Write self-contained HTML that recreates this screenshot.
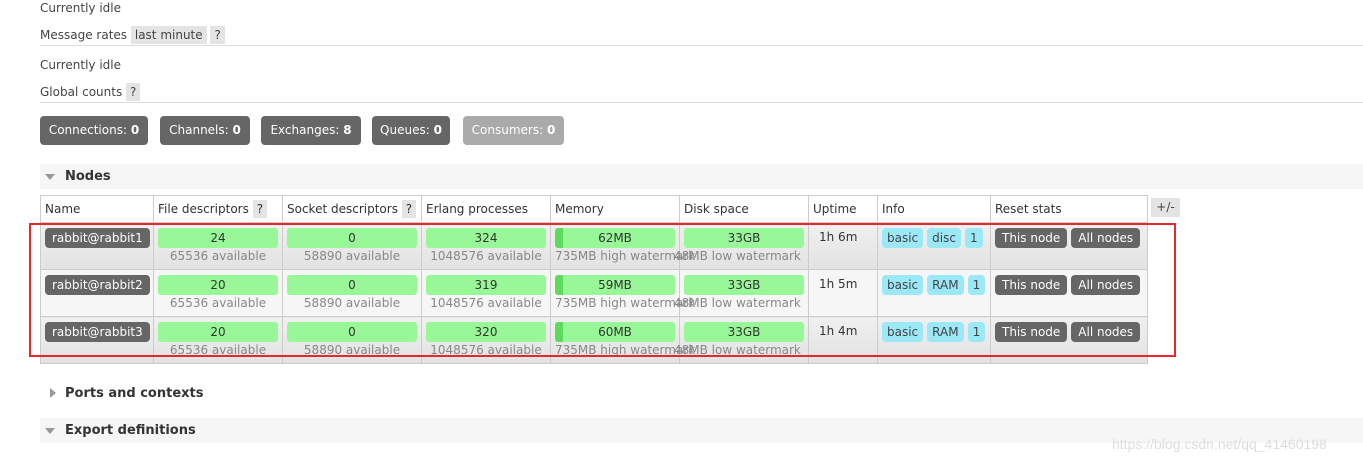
<!DOCTYPE html>
<html><head><style>
*{margin:0;padding:0;box-sizing:border-box}
body{width:1363px;height:463px;background:#fff;font-family:"DejaVu Sans","Liberation Sans",sans-serif;font-size:12px;color:#444;position:relative;overflow:hidden}
.a{position:absolute;white-space:nowrap}
.q{background:#e4e4e4;padding:2px 4px}
.hr{position:absolute;left:40px;right:0;height:1px;background:#ddd}
.btn{position:absolute;top:116px;height:29px;line-height:29px;background:#666;color:#fff;border-radius:4px;text-align:center;font-size:12px}
.btn b{font-weight:bold}
.band{position:absolute;left:40px;right:0;height:25px;background:#f6f6f6}
.tri{position:absolute;width:0;height:0}
td,th{border:1px solid #ccc;vertical-align:top;white-space:nowrap;overflow:visible}
table{position:absolute;left:40px;top:195px;border-collapse:collapse;font-size:12px;table-layout:fixed;width:1107px}
th{height:27px;font-weight:normal;text-align:left;padding:6px 4px 0;background:#fff;color:#333}
td{height:47px;padding:5px 4px 0;text-align:center;color:#333}
tr.g td{background:linear-gradient(#f0f0f0,#e2e2e2)}
tr.l td{background:#f6f6f6}
.bar{background:#98f898;height:20px;line-height:20px;border-radius:3px;color:#333}
.sub{color:#888;font-size:12px;line-height:16px;white-space:nowrap}
.nm{display:inline-block;background:#666;color:#fff;border-radius:4px;padding:0 7px;height:20px;line-height:20px;font-size:12px}
.tag{display:inline-block;background:#9ae8f8;border-radius:4px;height:20px;line-height:20px;padding:0 5px;margin-right:4px;color:#444}
.rb{display:inline-block;background:#666;color:#fff;border-radius:4px;height:20px;line-height:20px;padding:0 7px;margin-right:4px}
</style></head><body>
<div class="a" style="left:40px;top:1px">Currently idle</div>
<div class="a" style="left:40px;top:28px">Message rates <span class="q">last minute</span> <span class="q">?</span></div>
<div class="hr" style="top:45px"></div>
<div class="a" style="left:40px;top:58px">Currently idle</div>
<div class="a" style="left:40px;top:85px">Global counts <span class="q">?</span></div>
<div class="hr" style="top:102px"></div>
<div class="btn" style="left:40px;width:108px">Connections: <b>0</b></div>
<div class="btn" style="left:160px;width:90px">Channels: <b>0</b></div>
<div class="btn" style="left:261px;width:100px">Exchanges: <b>8</b></div>
<div class="btn" style="left:372px;width:78px">Queues: <b>0</b></div>
<div class="btn" style="left:463px;width:101px;background:#aaa">Consumers: <b>0</b></div>
<div class="band" style="top:164px"></div>
<div class="tri" style="left:45px;top:174px;border-left:5px solid transparent;border-right:5px solid transparent;border-top:6px solid #999"></div>
<div class="a" style="left:65px;top:169px;font-weight:bold;font-size:13px;color:#333">Nodes</div>
<table>
<colgroup><col style="width:113px"><col style="width:129px"><col style="width:139px"><col style="width:129px"><col style="width:129px"><col style="width:129px"><col style="width:69px"><col style="width:113px"><col style="width:157px"></colgroup>
<tr><th>Name</th><th>File descriptors <span class="q">?</span></th><th>Socket descriptors <span class="q">?</span></th><th>Erlang processes</th><th>Memory</th><th>Disk space</th><th>Uptime</th><th>Info</th><th>Reset stats</th></tr>
<tr class="g"><td style="text-align:left"><span class="nm">rabbit@rabbit1</span></td><td><div class="bar">24</div><div class="sub">65536 available</div></td><td><div class="bar">0</div><div class="sub">58890 available</div></td><td><div class="bar">324</div><div class="sub">1048576 available</div></td><td style="text-align:left"><div class="bar" style="text-align:center;background:linear-gradient(90deg,#5ddb5d 8px,#98f898 8px)">62MB</div><div class="sub">735MB high watermark</div></td><td><div class="bar">33GB</div><div class="sub" style="margin-left:-10px;text-align:left">48MB low watermark</div></td><td style="text-align:left;padding-left:10px;padding-top:7px">1h 6m</td><td style="text-align:left"><span class="tag">basic</span><span class="tag">disc</span><span class="tag">1</span></td><td style="text-align:left"><span class="rb">This node</span><span class="rb">All nodes</span></td></tr>
<tr class="l"><td style="text-align:left"><span class="nm">rabbit@rabbit2</span></td><td><div class="bar">20</div><div class="sub">65536 available</div></td><td><div class="bar">0</div><div class="sub">58890 available</div></td><td><div class="bar">319</div><div class="sub">1048576 available</div></td><td style="text-align:left"><div class="bar" style="text-align:center;background:linear-gradient(90deg,#5ddb5d 8px,#98f898 8px)">59MB</div><div class="sub">735MB high watermark</div></td><td><div class="bar">33GB</div><div class="sub" style="margin-left:-10px;text-align:left">48MB low watermark</div></td><td style="text-align:left;padding-left:10px;padding-top:7px">1h 5m</td><td style="text-align:left"><span class="tag">basic</span><span class="tag">RAM</span><span class="tag">1</span></td><td style="text-align:left"><span class="rb">This node</span><span class="rb">All nodes</span></td></tr>
<tr class="g"><td style="text-align:left"><span class="nm">rabbit@rabbit3</span></td><td><div class="bar">20</div><div class="sub">65536 available</div></td><td><div class="bar">0</div><div class="sub">58890 available</div></td><td><div class="bar">320</div><div class="sub">1048576 available</div></td><td style="text-align:left"><div class="bar" style="text-align:center;background:linear-gradient(90deg,#5ddb5d 8px,#98f898 8px)">60MB</div><div class="sub">735MB high watermark</div></td><td><div class="bar">33GB</div><div class="sub" style="margin-left:-10px;text-align:left">48MB low watermark</div></td><td style="text-align:left;padding-left:10px;padding-top:7px">1h 4m</td><td style="text-align:left"><span class="tag">basic</span><span class="tag">RAM</span><span class="tag">1</span></td><td style="text-align:left"><span class="rb">This node</span><span class="rb">All nodes</span></td></tr>
</table>
<div class="a" style="left:1151px;top:198px;width:29px;height:19px;background:#e4e4e4;text-align:center;line-height:19px">+/-</div>
<div class="a" style="left:29px;top:223px;width:1147px;height:134px;border:2px solid #e8262c"></div>
<div class="tri" style="left:50px;top:388px;border-top:5px solid transparent;border-bottom:5px solid transparent;border-left:6px solid #999"></div>
<div class="a" style="left:65px;top:386px;font-weight:bold;font-size:13px;color:#333">Ports and contexts</div>
<div class="band" style="top:418px"></div>
<div class="tri" style="left:45px;top:428px;border-left:5px solid transparent;border-right:5px solid transparent;border-top:6px solid #999"></div>
<div class="a" style="left:65px;top:423px;font-weight:bold;font-size:13px;color:#333">Export definitions</div>
<div class="a" style="left:1112px;top:436px;color:#ddd;font-size:14px;font-family:'Liberation Sans',sans-serif">https://blog.csdn.net/qq_41460198</div>
</body></html>
